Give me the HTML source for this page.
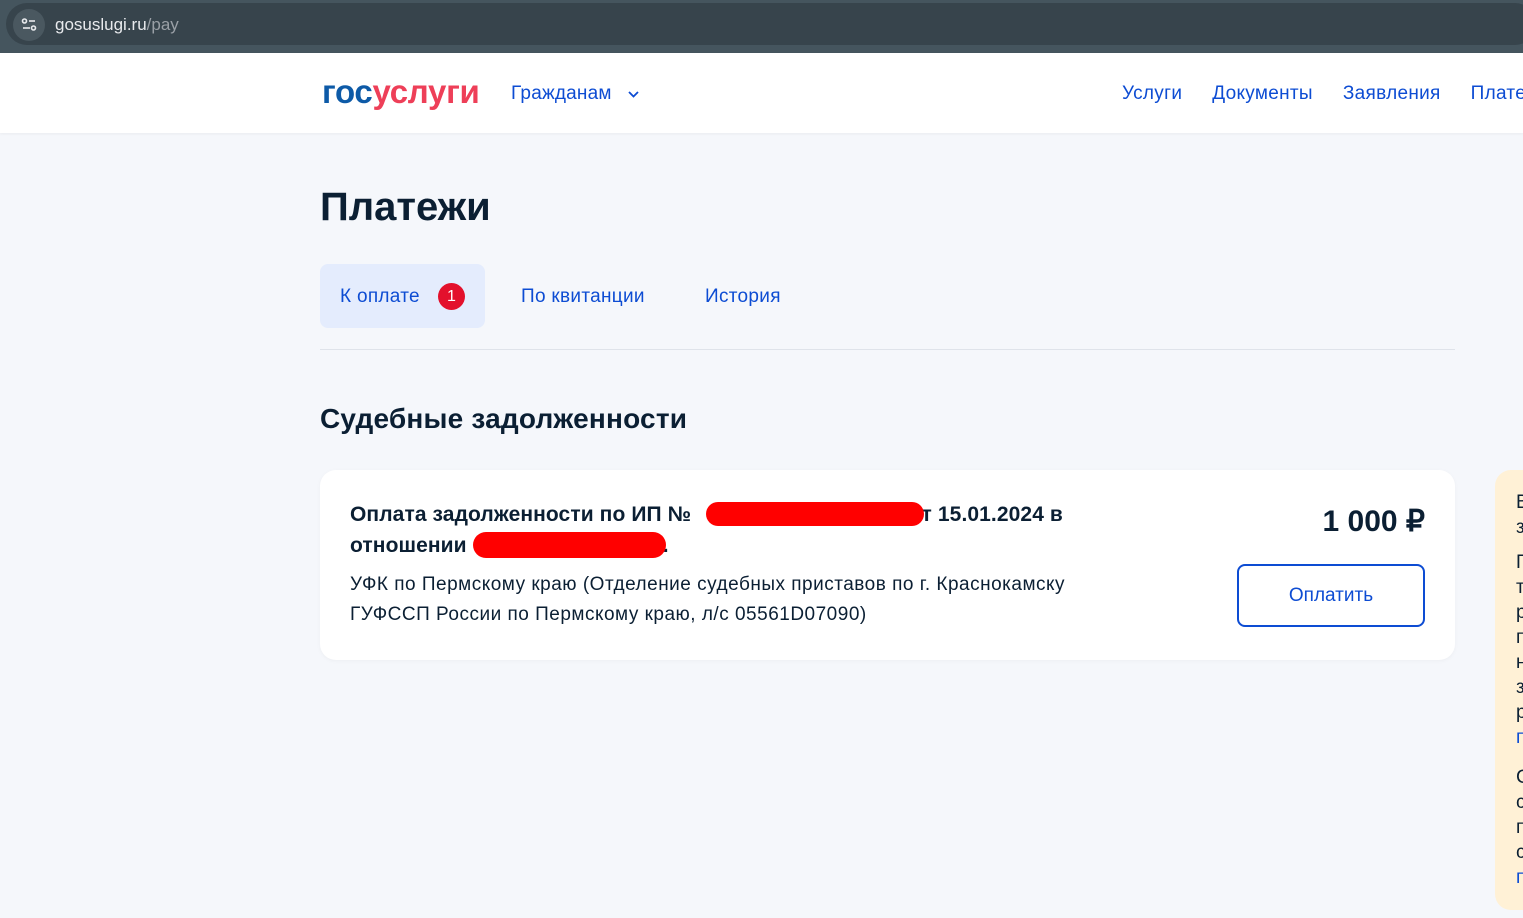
<!DOCTYPE html><html><head><meta charset="utf-8"><style>
body{margin:0;width:1523px;height:918px;overflow:hidden;background:#f5f7fb;font-family:"Liberation Sans",sans-serif;position:relative}
.a{position:absolute}
.bl{color:#0d4cd3}
</style></head><body>
<div class="a" style="left:0;top:0;width:1523px;height:53px;background:#45555e"></div>
<div class="a" style="left:6px;top:3px;width:1530px;height:42px;border-radius:21px;background:#37444c"></div>
<div class="a" style="left:13px;top:9px;width:32px;height:32px;border-radius:16px;background:#4a5860"></div>
<svg class="a" style="left:21px;top:17px" width="16" height="16" viewBox="0 0 16 16" fill="none" stroke="#e8eaed" stroke-width="1.6"><circle cx="3.5" cy="4" r="2"/><line x1="8" y1="4" x2="14" y2="4"/><line x1="2" y1="11" x2="9" y2="11"/><circle cx="12.5" cy="11" r="2"/></svg>
<div class="a" style="left:55px;top:15px;font-size:17px;color:#e8eaed">gosuslugi.ru<span style="color:#9aa0a6">/pay</span></div>
<div class="a" style="left:0;top:53px;width:1523px;height:80px;background:#fff;box-shadow:0 1px 3px rgba(0,0,0,.05)"></div>
<div class="a" style="left:322px;top:73px;font-size:33px;font-weight:bold;letter-spacing:-0.3px"><span style="color:#0d5aa7">гос</span><span style="color:#ee3f58">услуги</span></div>
<div class="a bl" style="left:511px;top:83px;font-size:19px;letter-spacing:0.2px">Гражданам</div>
<svg class="a" style="left:627px;top:89px" width="13" height="10" viewBox="0 0 13 10"><path d="M2 3l4.5 4.5L11 3" stroke="#0d4cd3" stroke-width="1.8" fill="none"/></svg>
<div class="a bl" style="left:1122px;top:83px;font-size:19px;white-space:nowrap;letter-spacing:0.3px">Услуги<span style="margin-left:30px">Документы</span><span style="margin-left:30px">Заявления</span><span style="margin-left:30px">Платежи</span></div>
<div class="a" style="left:320px;top:185px;font-size:40px;font-weight:bold;color:#0b1f33">Платежи</div>
<div class="a" style="left:320px;top:264px;width:165px;height:64px;border-radius:8px;background:#e4ecfd"></div>
<div class="a bl" style="left:340px;top:286px;font-size:19px;letter-spacing:0.3px">К оплате</div>
<div class="a" style="left:438px;top:283px;width:27px;height:27px;border-radius:50%;background:#e3102c;color:#fff;font-size:16px;text-align:center;line-height:27px">1</div>
<div class="a bl" style="left:521px;top:286px;font-size:19px;letter-spacing:0.3px">По квитанции</div>
<div class="a bl" style="left:705px;top:286px;font-size:19px;letter-spacing:0.3px">История</div>
<div class="a" style="left:320px;top:349px;width:1135px;height:1px;background:#dfe3ea"></div>
<div class="a" style="left:320px;top:403px;font-size:28px;font-weight:bold;color:#0b1f33;letter-spacing:0.2px">Судебные задолженности</div>
<div class="a" style="left:320px;top:470px;width:1135px;height:190px;border-radius:16px;background:#fff;box-shadow:0 1px 4px rgba(0,0,0,.04)"></div>
<div class="a" style="left:350px;top:499px;font-size:21px;font-weight:bold;color:#0b1f33;line-height:31px;width:780px;white-space:nowrap;letter-spacing:0.1px">Оплата задолженности по ИП №<span style="display:inline-block;width:218px"></span>от 15.01.2024 в<br>отношении<span style="display:inline-block;width:196px"></span>.</div>
<div class="a" style="left:706px;top:502px;width:218px;height:24px;border-radius:12px;background:#ff0000"></div>
<div class="a" style="left:473px;top:532px;width:193px;height:26px;border-radius:13px;background:#ff0000"></div>
<div class="a" style="left:350px;top:570px;font-size:19px;color:#0b1f33;line-height:30px;letter-spacing:0.5px;white-space:nowrap">УФК по Пермскому краю (Отделение судебных приставов по г. Краснокамску<br>ГУФССП России по Пермскому краю, л/с 05561D07090)</div>
<div class="a" style="left:1270px;top:504px;width:155px;text-align:right;font-size:30px;font-weight:bold;color:#0b1f33">1 000 ₽</div>
<div class="a bl" style="left:1237px;top:564px;width:184px;height:59px;border:2px solid #0d4cd3;border-radius:8px;text-align:center;line-height:59px;font-size:19px">Оплатить</div>
<div class="a" style="left:1495px;top:470px;width:60px;height:440px;border-radius:16px;background:#fff1d6"></div>
<div class="a" style="left:1516px;top:490px;font-size:19px;color:#0b1f33;line-height:25px;overflow:hidden;width:7px">В<br>з<div style="height:10px"></div>П<br>т<br>р<br>п<br>н<br>з<br>р<br><span class="bl">п</span><div style="height:15px"></div>С<br>с<br>п<br>с<br><span class="bl">п</span></div>
</body></html>
